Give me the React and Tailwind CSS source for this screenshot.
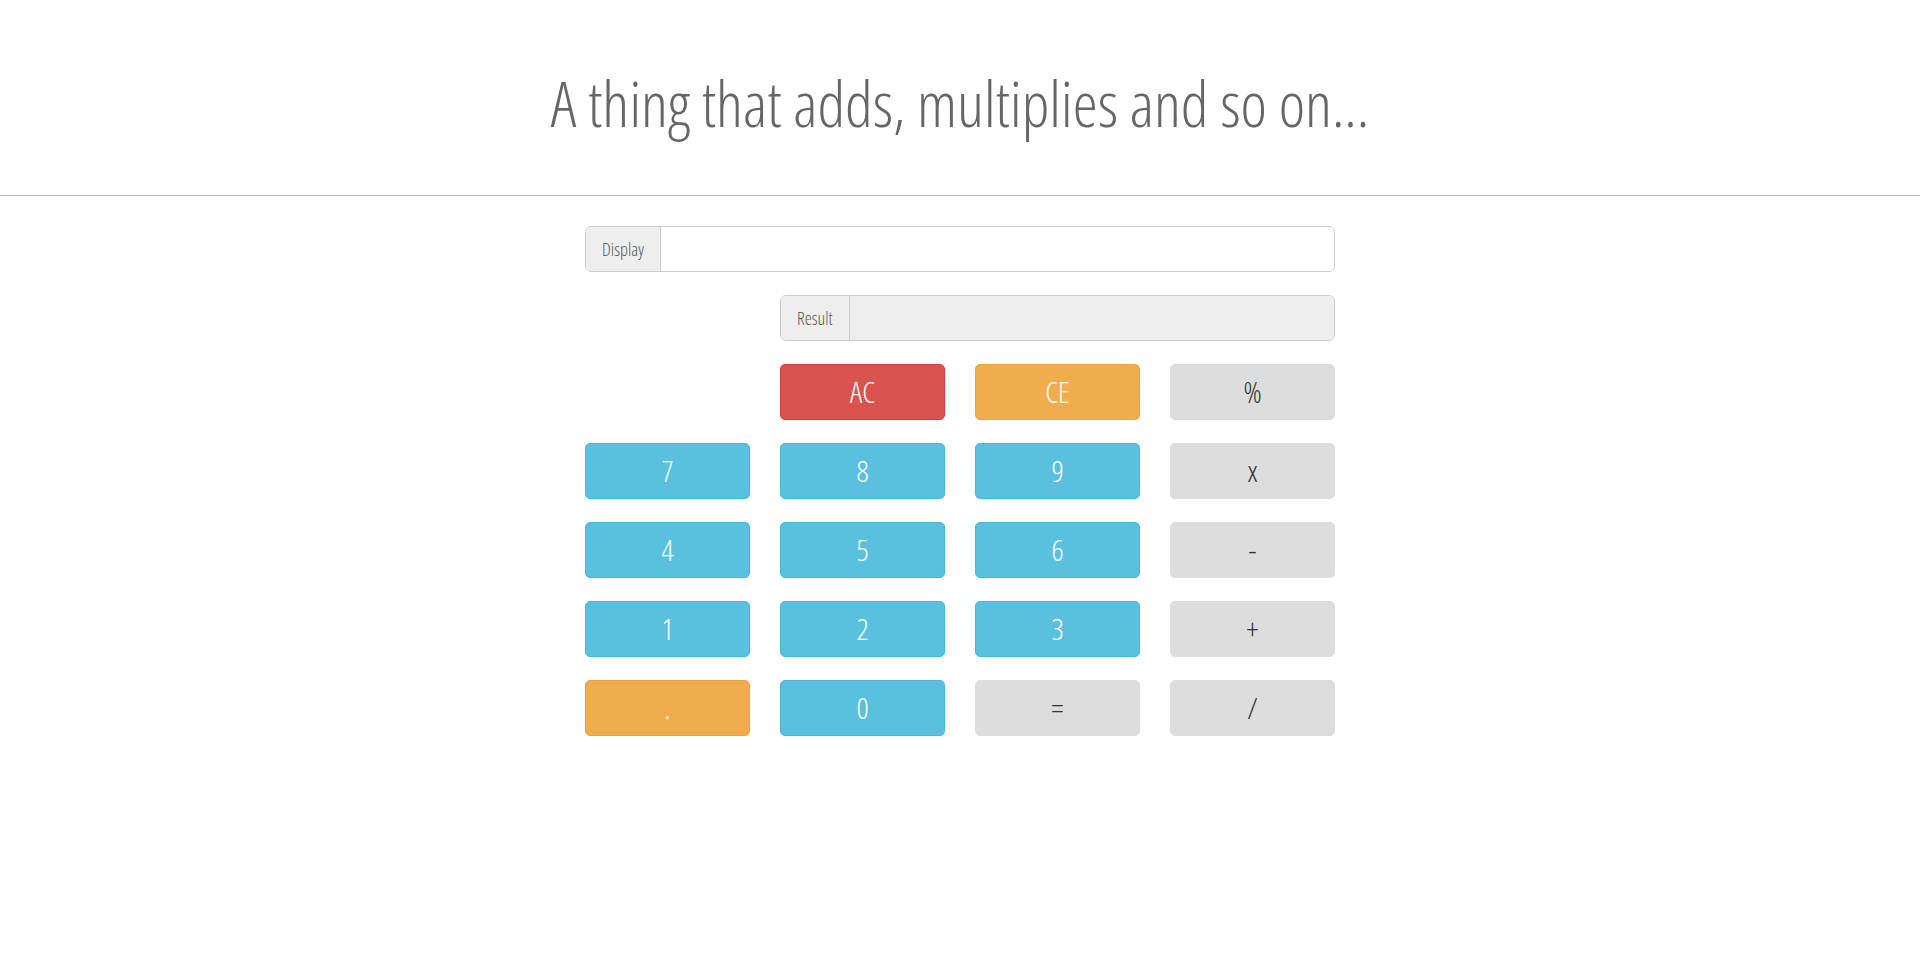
import React, { useState } from "react";

const font = { fontFamily: "'Open Sans', 'Liberation Sans Narrow', sans-serif" };

const styles = {
  red: "bg-[#d9534f] border-[#d43f3a] text-white",
  orange: "bg-[#f0ad4e] border-[#eea236] text-white",
  blue: "bg-[#5bc0de] border-[#46b8da] text-white",
  gray: "bg-[#dddddd] border-[#dddddd] text-[#333333]",
};

const rows = [
  [null, ["AC", "red"], ["CE", "orange"], ["%", "gray"]],
  [["7", "blue"], ["8", "blue"], ["9", "blue"], ["x", "gray"]],
  [["4", "blue"], ["5", "blue"], ["6", "blue"], ["-", "gray"]],
  [["1", "blue"], ["2", "blue"], ["3", "blue"], ["+", "gray"]],
  [[".", "orange"], ["0", "blue"], ["=", "gray"], ["/", "gray"]],
];

const App = () => {
  const [display, setDisplay] = useState("");

  return (
    <div className="min-h-screen bg-white font-light [font-stretch:75%]" style={font}>
      {/* header */}
      <div className="pt-[68px] pb-[57px] border-b border-[#b9b9b9]">
        <h1 className="text-center text-[63px] leading-[70px] text-[#666666] font-light">
          A thing that adds, multiplies and so on...
        </h1>
      </div>

      <div className="w-[750px] mx-auto mt-[30px]">
        <div className="flex h-[46px] rounded-[6px] border border-[#cccccc] overflow-hidden">
          <span className="flex items-center px-4 bg-[#eeeeee] border-r border-[#cccccc] text-[18px] text-[#555555]">
            Display
          </span>
          <input
            value={display}
            onChange={(e) => setDisplay(e.target.value)}
            className="flex-1 px-4 outline-none text-[18px] bg-white"
          />
        </div>

        <div className="grid grid-cols-4 gap-x-[30px] mt-[23px]">
          <div className="col-start-2 col-span-3 flex h-[46px] rounded-[6px] border border-[#cccccc] overflow-hidden">
            <span className="flex items-center px-4 bg-[#eeeeee] border-r border-[#cccccc] text-[18px] text-[#555555]">
              Result
            </span>
            <input readOnly className="flex-1 px-4 outline-none text-[18px] bg-[#eeeeee]" />
          </div>
        </div>

        <div className="grid grid-cols-4 gap-x-[30px] gap-y-[23.5px] mt-[23px]">
          {rows.flat().map((b, i) =>
            b ? (
              <button
                key={i}
                onClick={() => setDisplay(display + b[0])}
                className={`h-[55.5px] rounded-[5px] border text-[30px] leading-none font-light ${styles[b[1]]}`}
              >
                {b[0]}
              </button>
            ) : (
              <div key={i} />
            )
          )}
        </div>
      </div>
    </div>
  );
};

export default App;
